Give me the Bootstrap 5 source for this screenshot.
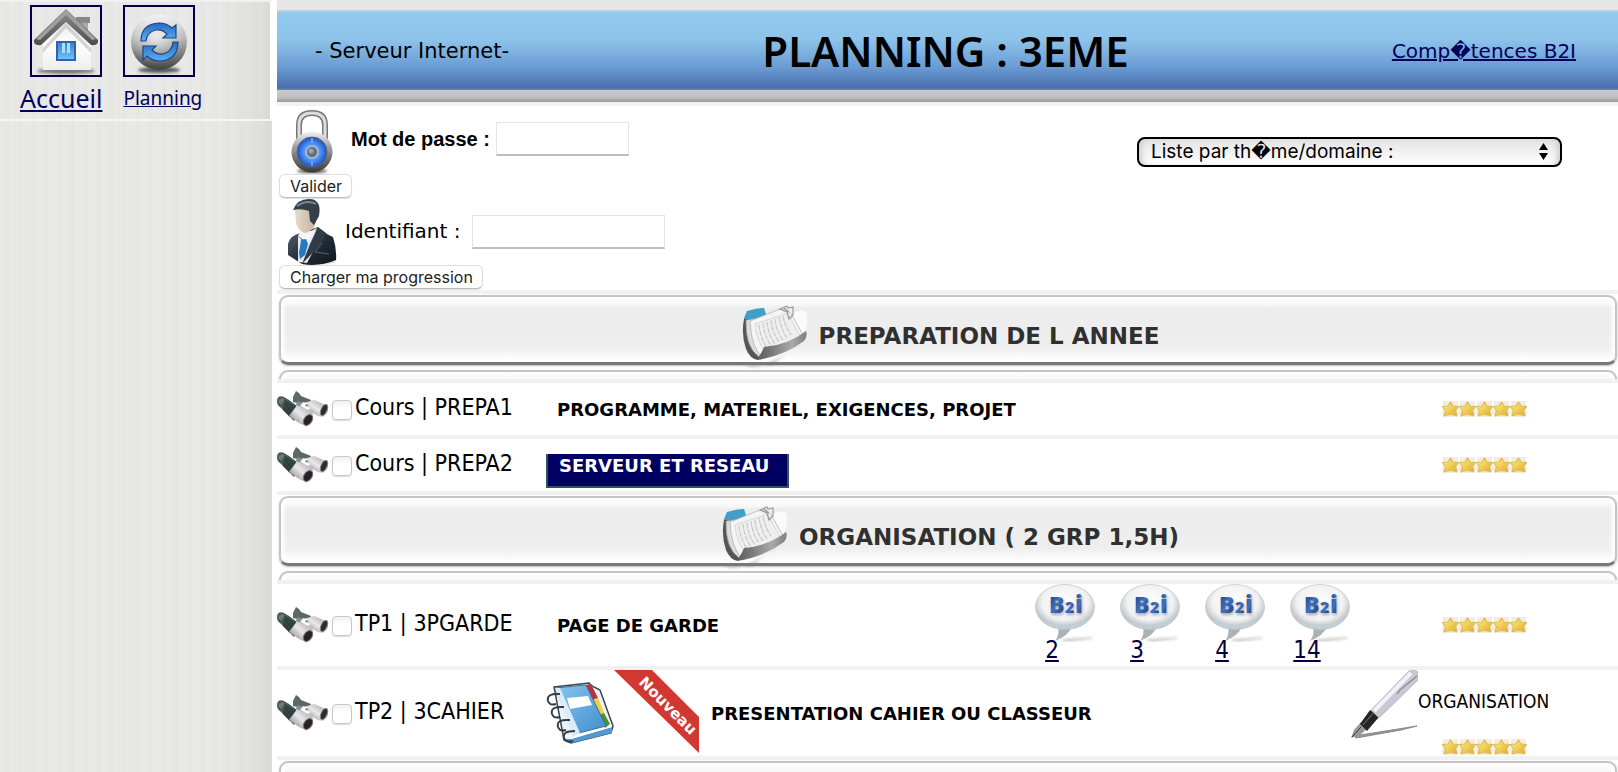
<!DOCTYPE html>
<html lang="fr">
<head>
<meta charset="utf-8">
<meta name="viewport" content="width=device-width, initial-scale=1">
<title>Planning : 3EME</title>
<link rel="stylesheet" href="https://cdn.jsdelivr.net/npm/bootstrap@5.3.0/dist/css/bootstrap.min.css">
<script src="https://cdn.jsdelivr.net/npm/bootstrap@5.3.0/dist/js/bootstrap.bundle.min.js"></script>
<style>
  body { font-family: "DejaVu Sans", Verdana, sans-serif; font-size: 20px; line-height: 24px; color: #000; background: #fff; }
  svg { display: block; flex: none; }
  a { color: #00005a; }
  .side-panel { width: 277px; background: #fff; }
  .stripes { background: linear-gradient(90deg, transparent 80%, rgba(0,0,0,.03) 93%, rgba(0,0,0,.06)), repeating-linear-gradient(90deg, #e8e8e7 0 5px, #e6e6e5 5px 10px, #e9e9e8 10px 13px); }
  .side-top { width: 270px; height: 117px; padding: 3px 0 0 20px; gap: 21px; font-family: "Noto Sans", sans-serif; }
  .side-rest { width: 272px; border-top: 2px solid #f5f5f5; }
  .side-line { height: 2px; width: 272px; background: #f1f1f1; }
  .pict { border: 2px solid #00004d; }
  .txt-home { font-size: 25px; line-height: 32px; padding-top: 5px; }
  .txt-plan { font-size: 19px; line-height: 32px; padding-top: 5px; }
  .top-strip { height: 12px; background: #e6e6e6; border-bottom: 2px solid #c3cdd0; }
  .blue-bar { height: 78px; background: linear-gradient(#93c9ee, #8ec3ea 35%, #6b9dd4 70%, #4a6eaf 97%, #7388ae); padding: 0 42px 0 38px; }
  .blue-bar h1 { font-family: "Noto Sans", sans-serif; font-weight: 600; font-size: 42px; line-height: 48px; }
  .server { font-size: 21px; }
  .grey-bar { height: 16px; background: linear-gradient(#c9cccb, #bfc1c0 60%, #979999) no-repeat 0 0 / 100% 12px #f2f2f2; }
  .login-area { height: 184px; padding: 4px 56px 0 1px; }
  .field { border: 1px solid #e4e4e4; border-bottom: 2px solid #bdbdbd; height: 34px; background: #fff; padding: 0 6px; }
  .pwd { width: 133px; margin-top: 12px; }
  .ident { width: 193px; }
  .lbl-pwd { font: bold 20px/24px "Liberation Sans", Arial, sans-serif; padding-top: 17px; margin-right: 6px; }
  .lbl-ident { margin-right: 12px; padding-bottom: 2px; }
  .mac-btn { font: 16px/22px Inter, sans-serif; color: #222; background: #fff; border: 1px solid #dedede; border-bottom-color: #bdbdbd; border-radius: 6px; padding: 0 9px 0 10px; margin-left: 1px; height: 24px; box-shadow: 0 1px 1px rgba(0,0,0,.12); }
  .theme-box { padding-top: 27px; }
  .theme-list { font: 19px/24px Inter, "DejaVu Sans", sans-serif; color: #000; appearance: none; width: 425px; height: 30px; border: 2px solid #000; border-radius: 8px; padding: 0 12px; background: linear-gradient(#e3e3e3, #fff); box-shadow: inset 5px 0 5px -2px #d0d0d0, inset -5px 0 5px -2px #d0d0d0; }
  .select-arrows { position: absolute; right: 14px; top: 6px; pointer-events: none; }
  .plan { table-layout: fixed; border-collapse: separate; border-spacing: 0 4px; background: #f1f1f1; }
  .plan td { background: #fff; padding: 0; vertical-align: middle; }
  .plan th { background: #fff; padding: 0; font-weight: bold; }
  .h-short { height: 52px; } .h-b2i { height: 82px; } .h-tall { height: 86px; }
  .c-code { width: 269px; } .c-b2i { width: 328px; } .c-stars { width: 267px; }
  .strip { height: 85px; overflow: hidden; padding: 1px 1px 0 2px; }
  .bevel { height: 70px; border: 2px solid #c4c4c4; border-bottom: 3px solid #7b7777; border-radius: 9px; box-shadow: 0 1px 2px #bbb, inset 3px 0 4px #fff, inset -3px 0 4px #fff; background: linear-gradient(#fdfdfd, #f7f7f7 8px, #ededed 11px, #eee 50px, #fff 64px); margin-bottom: 5px; }
  .bevel-title { font-size: 23px; line-height: 28px; color: #303030; gap: 9px; padding-left: 5px; }
  .bevel-title svg { margin-top: 16px; }
  .bevel-title span { padding-top: 12px; }
  .code { font-family: "DejaVu Sans Condensed", "DejaVu Sans", sans-serif; font-size: 23px; line-height: 28px; padding-bottom: 4px; margin-left: 3px; }
  .plan .tick { width: 20px; height: 20px; margin: 2px 0 0 3px; border: 1px solid #c8c8c8; border-radius: 4px; background: linear-gradient(#f0f0f0, #fff 40%); box-shadow: 0 1px 1px #ddd; }
  .lesson { font-size: 18px; font-weight: bold; padding: 1px 0 0 11px; }
  .active-lesson { display: inline-block; width: 243px; height: 34px; margin: 12px 0 0; padding-left: 11px; font-size: 18px; line-height: 23px; font-weight: bold; color: #fff; background: #000062; border: 2px solid #2c5560; border-top: 0; text-decoration: none; vertical-align: middle; }
  .b2i-item { width: 60px; height: 82px; margin-right: 25px; }
  .b2i-item a { font-family: "DejaVu Sans Condensed", "DejaVu Sans", sans-serif; font-size: 24px; line-height: 24px; width: 34px; margin-top: -4px; color: #00003f; text-align: center; }
  .skill { font-family: "DejaVu Sans Condensed", "DejaVu Sans", sans-serif; font-size: 19px; line-height: 62px; }
</style>
</head>
<body>
<svg width="0" height="0" class="position-absolute" aria-hidden="true">
  <defs>
    <linearGradient id="roof" x1="0" y1="0" x2="0" y2="1"><stop offset="0" stop-color="#8d8d8d"/><stop offset="1" stop-color="#4d4d4d"/></linearGradient>
    <linearGradient id="wall" x1="0" y1="0" x2="0" y2="1"><stop offset="0" stop-color="#e9e9e9"/><stop offset=".5" stop-color="#fff"/><stop offset="1" stop-color="#ededed"/></linearGradient>
    <linearGradient id="pane" x1="0" y1="0" x2="0" y2="1"><stop offset="0" stop-color="#3b7fd3"/><stop offset="1" stop-color="#6fc6f5"/></linearGradient>
    <linearGradient id="ball" x1="0" y1="0" x2="0" y2="1"><stop offset="0" stop-color="#f0f0f0"/><stop offset=".45" stop-color="#b4b6b6"/><stop offset=".8" stop-color="#6a6c6c"/><stop offset="1" stop-color="#3f4040"/></linearGradient>
    <radialGradient id="ballglow" cx=".45" cy=".4" r=".5"><stop offset="0" stop-color="#fff" stop-opacity=".7"/><stop offset="1" stop-color="#fff" stop-opacity="0"/></radialGradient>
    <linearGradient id="arrow" x1="0" y1="0" x2="0" y2="1"><stop offset="0" stop-color="#2a68bd"/><stop offset="1" stop-color="#57b2f3"/></linearGradient>
    <linearGradient id="lockbody" x1="0" y1="0" x2="0" y2="1"><stop offset="0" stop-color="#f4f4f4"/><stop offset=".35" stop-color="#a5a5a5"/><stop offset="1" stop-color="#393939"/></linearGradient>
    <radialGradient id="dial"><stop offset="0" stop-color="#9fd0ff"/><stop offset=".6" stop-color="#4a8cf5"/><stop offset="1" stop-color="#1c4fc4"/></radialGradient>
    <linearGradient id="suit" x1="0" y1="0" x2="1" y2="1"><stop offset="0" stop-color="#5a6573"/><stop offset=".5" stop-color="#252e3b"/><stop offset="1" stop-color="#10161f"/></linearGradient>
    <linearGradient id="face" x1="0" y1="0" x2="1" y2="0"><stop offset="0" stop-color="#e5dacb"/><stop offset="1" stop-color="#c5b29b"/></linearGradient>
    <linearGradient id="silver" x1="0" y1="1" x2="1" y2="0"><stop offset="0" stop-color="#6c6a6c"/><stop offset=".5" stop-color="#ebe8ea"/><stop offset="1" stop-color="#9b989b"/></linearGradient>
    <linearGradient id="folder" x1="0" y1="0" x2="1" y2="0"><stop offset="0" stop-color="#5c5c5c"/><stop offset=".3" stop-color="#7a7a7a"/><stop offset=".7" stop-color="#aaa"/><stop offset="1" stop-color="#7e7e7e"/></linearGradient>
    <linearGradient id="starfill" x1="0" y1="0" x2="1" y2="1"><stop offset="0" stop-color="#fdf0a0"/><stop offset=".5" stop-color="#f0ce5a"/><stop offset="1" stop-color="#dba72e"/></linearGradient>
    <radialGradient id="bubblefill" cx=".5" cy=".4" r=".6"><stop offset="0" stop-color="#fff"/><stop offset=".65" stop-color="#f1f2f4"/><stop offset="1" stop-color="#a9adb2"/></radialGradient>
    <linearGradient id="b2iblue" x1="0" y1="0" x2="1" y2="1"><stop offset="0" stop-color="#12306e"/><stop offset=".5" stop-color="#3f72c2"/><stop offset="1" stop-color="#142e68"/></linearGradient>
    <linearGradient id="cover" x1="0" y1="0" x2="1" y2="1"><stop offset="0" stop-color="#8ac4ec"/><stop offset="1" stop-color="#3f8fd0"/></linearGradient>
    <filter id="soft" x="-30%" y="-100%" width="160%" height="300%"><feGaussianBlur stdDeviation="1.5"/></filter>

    <symbol id="i-bino" viewBox="0 0 52 38">
      <path d="M16 7 19 1l3 2 2 3 10 4-1 5-9-1-8-2z" fill="#5d6966"/>
      <path d="M0 11c0-4 3-6 7-4l5 3 12 9-7 12L3 17c-2-1-3-3-3-6z" fill="#4a5957"/>
      <path d="M8 10l13 8-8 9-7-7z" fill="#32423f"/>
      <path d="M2 10q2-3 6-1l-4 6q-3-2-2-5z" fill="#6d7b78"/>
      <path d="M27 13l10-3 12 5c4 3 2 10-3 12l-5-1-14-8z" fill="url(#silver)"/>
      <path d="M12 26l9-12 14 8c3 5-1 12-6 14l-7-3z" fill="url(#silver)"/>
      <path d="M20 11l12 4-5 3-8-3z" fill="#87908e"/>
      <path d="M26 12l4 1-2 3 6 2-3 2-8-4z" fill="#f8f8f8"/>
      <ellipse cx="31" cy="30" rx="4" ry="6" transform="rotate(35 31 30)" fill="#2b2029" stroke="#777"/>
      <ellipse cx="47" cy="20" rx="3" ry="6" transform="rotate(25 47 20)" fill="#30292e" stroke="#888"/>
    </symbol>
    <symbol id="i-star" viewBox="0 0 17 17">
      <path d="M1 0h15l1 13-4 3H3l-3-3z" fill="#f1ede3"/>
      <path d="M8.500 1 11 5l5.500.5-3 4 1.500 5.500q-6.500-2.500-13 0l1.500-5.500-3-4L6 5z" fill="url(#starfill)" stroke="#e3bb4c" stroke-width="1.200" stroke-linejoin="round"/>
    </symbol>
    <symbol id="i-stars" viewBox="0 0 85 17">
      <use href="#i-star" width="17" height="17"/><use href="#i-star" x="17" width="17" height="17"/><use href="#i-star" x="34" width="17" height="17"/><use href="#i-star" x="51" width="17" height="17"/><use href="#i-star" x="68" width="17" height="17"/>
    </symbol>
    <symbol id="i-folder" viewBox="0 0 68 66">
      <path d="M2 60Q18 66 42 50L64 32 30 60z" fill="#777" opacity=".55" filter="url(#soft)"/>
      <path d="M50 8Q62 3 65 8Q67 20 60 30L48 24z" fill="#fafafa"/>
      <path d="M2 13 5 6q10-3 17-3l2 6-4 4L2 17z" fill="#3f9fc9"/>
      <path d="M2 14Q-1 30 4 44Q8 54 16 55L19 49Q8 38 8 14z" fill="#555"/>
      <path d="M4 15Q3 42 17 52L27 38 15 13z" fill="#dcdcdc" stroke="#8b8b8b" stroke-width=".7"/>
      <path d="M8 16 38 4Q48 5 51 12L61 30 20 52Q9 42 8 16z" fill="#f4f4f4" stroke="#aaa" stroke-width=".7"/>
      <path d="M13 19 46 8Q54 25 59 32L24 47Q15 38 13 19z" fill="#efefef" stroke="#ccc" stroke-width=".7"/>
      <path d="M17 20q1 12 8 23M21 18q1 12 8 23M25 17q1 12 8 22M29 15q1 12 8 22M33 14q1 12 8 21M37 12q2 12 8 21M41 11q2 10 8 19" fill="none" stroke="#cacaca" stroke-width="1.300" stroke-dasharray="5 1"/>
      <path d="M15 55Q20 47 22 42Q46 40 64 26Q66 31 62 36Q42 51 15 55z" fill="url(#folder)"/>
      <path d="M38 4l7-3 1 2 5-1v8l-4 4-2-7zM42 3l5 4" fill="none" stroke="#999" stroke-width="1.200"/>
    </symbol>
    <symbol id="i-b2i" viewBox="0 0 60 58">
      <path d="M27 56 57 54 33 57z" fill="#777" stroke="#888" opacity=".6" filter="url(#soft)"/>
      <path d="M23 42l13 2q-2 7-16 13 5-6 3-15z" fill="#a9b2b7"/>
      <ellipse cx="30" cy="23" rx="29.500" ry="22.500" fill="url(#bubblefill)" stroke="#c7c9cc" stroke-width=".8"/>
      <path d="M5 34Q30 50 55 34Q47 45 30 45T5 34z" fill="#c1cfd7"/>
      <g font-family="Noto Sans, sans-serif" font-weight="900" fill="#777" opacity=".6" filter="url(#soft)"><text x="15" y="31" font-size="23">B</text><text x="31" y="31" font-size="16">2</text><text x="41" y="31" font-size="24">i</text></g>
      <g font-family="Noto Sans, sans-serif" font-weight="900" fill="url(#b2iblue)"><text x="14" y="29" font-size="23">B</text><text x="30" y="29" font-size="16">2</text><text x="40" y="29" font-size="24">i</text></g>
    </symbol>
  </defs>
</svg>

<div class="d-flex vh-100 overflow-hidden">
  <nav class="side-panel d-flex flex-column flex-shrink-0">
    <div class="side-line"></div>
    <div class="side-top stripes d-flex">
      <a href="#" class="d-flex flex-column align-items-end">
        <svg class="pict" width="72" height="72" viewBox="0 0 68 68" role="img" aria-label="Accueil">
          <ellipse cx="34" cy="64" rx="29" ry="3" fill="#777" filter="url(#soft)"/>
          <path d="M46 10h12v6h-2v18l-10-9z" fill="#aaa"/><path d="M44 10h14v6H44z" fill="#888"/>
          <path d="M11 37 34 12l25 25v26H11z" fill="url(#wall)"/>
          <path d="M11 41 34 16l25 25v5L34 21 11 46z" fill="#bdbdbd" opacity=".6"/>
          <path d="M34 2 66 33q1 6-7 5L34 15 9 38q-8 1-7-5z" fill="url(#roof)"/>
          <path d="M34 3 64 32 60 33 34 8 8 33 4 32z" fill="#a0a0a0"/>
          <path d="M25 35h18v18H25z" fill="url(#pane)" stroke="#3660aa" stroke-width="2"/>
          <path d="M30 36h3v10h-3zM35 36h3v10h-3z" fill="#a5e2fb"/>
        </svg>
        <span class="txt-home">Accueil</span>
      </a>
      <a href="#" class="d-flex flex-column align-items-start">
        <svg class="pict" width="72" height="72" viewBox="0 0 68 68" role="img" aria-label="Planning">
          <ellipse cx="34" cy="63" rx="21" ry="3" fill="#555" filter="url(#soft)"/>
          <circle cx="34" cy="35" r="28" fill="url(#ball)"/><circle cx="34" cy="35" r="28" fill="url(#ballglow)"/>
          <path d="M16 34Q16 17 34 16q8 0 13 5l4-3v13H38l4-4q-5-5-11-4-9 2-10 11z" fill="url(#arrow)" stroke="#1c4784" stroke-width="1.200"/>
          <path d="M53 35q0 18-18 19-8 0-13-5l-4 4V39h13l-4 4q5 5 11 4 9-2 10-12z" fill="url(#arrow)" stroke="#1c4784" stroke-width="1.200"/>
        </svg>
        <span class="txt-plan">Planning</span>
      </a>
    </div>
    <div class="side-rest stripes flex-grow-1"></div>
  </nav>

  <main class="flex-grow-1 overflow-hidden">
    <header>
      <div class="top-strip"></div>
      <div class="blue-bar row g-0 align-items-center">
        <div class="col server">- Serveur Internet-</div>
        <h1 class="col-auto m-0">PLANNING : 3EME</h1>
        <div class="col text-end"><a href="#">Comp�tences B2I</a></div>
      </div>
      <div class="grey-bar"></div>
    </header>

    <section class="login-area d-flex justify-content-between">
      <div>
        <form>
          <div class="d-flex align-items-start">
            <svg width="73" height="64" viewBox="0 0 73 64" aria-hidden="true">
              <ellipse cx="34" cy="61" rx="15" ry="2" fill="#555" filter="url(#soft)"/>
              <path d="M21 30V15Q21 3 34 3T47 15V30" fill="none" stroke="#777" stroke-width="6"/>
              <path d="M21 30V15Q21 3 34 3T47 15V30" fill="none" stroke="#ddd" stroke-width="3"/>
              <circle cx="34" cy="42" r="20.500" fill="url(#lockbody)"/>
              <circle cx="34" cy="42" r="15" fill="url(#dial)" stroke="#567" stroke-width="1"/>
              <path d="M34 28v5M34 51v5" stroke="#9fd1ff"/>
              <circle cx="34" cy="42" r="6" fill="#667079" stroke="#b4c2cc" stroke-width="1.500"/><circle cx="33" cy="41" r="2.500" fill="#9ca4ab"/>
            </svg>
            <label class="lbl-pwd" for="pwd">Mot de passe :</label>
            <input class="field pwd" type="password" id="pwd">
          </div>
          <button type="button" class="mac-btn d-block">Valider</button>
        </form>
        <form>
          <div class="d-flex align-items-center">
            <svg width="67" height="67" viewBox="-1 0 67 67" aria-hidden="true">
              <ellipse cx="38" cy="62" rx="18" ry="3" fill="#888" filter="url(#soft)"/>
              <path d="M9 46Q11 37 22 35l17-6q4 5 15 10 4 12 3 23-17 7-34 4L9 57z" fill="url(#suit)"/>
              <path d="M19 38 30 46 38 30 32 33 22 32z" fill="#f3f5f7"/><path d="M19 38l5 5-3 18 8-18 10-13-2 18-9 17-9-1z" fill="#e5eaef"/>
              <path d="M22 42l5-1 2 5-3 11-5 4-1-6z" fill="#2778bd"/>
              <path d="M31 46 39 29l8 6-4 10-20 21z" fill="#323c48"/><path d="M43 45l-7 9 14 2" fill="none" stroke="#596371"/>
              <path d="M16 11Q22 7 32 10L37 24Q35 33 26 35 19 33 17 25z" fill="url(#face)"/>
              <path d="M14 12Q18 1 30 1 43 1 40 18l-5 9-4-4-1-10q-8-3-16-1z" fill="#353f49"/>
              <path d="M18 8Q28 1 37 6" fill="none" stroke="#7a8792" stroke-width="2"/>
            </svg>
            <label class="lbl-ident" for="ident">Identifiant :</label>
            <input class="field ident" type="text" id="ident">
          </div>
          <button type="button" class="mac-btn d-block">Charger ma progression</button>
        </form>
      </div>
      <div class="theme-box">
        <div class="position-relative">
          <select class="theme-list d-block" aria-label="Liste par thème"><option>Liste par th�me/domaine :</option></select>
          <svg class="select-arrows" width="9" height="18" viewBox="0 0 9 18" aria-hidden="true"><path d="M0 7 4.500 0 9 7zM0 10h9l-4.500 7z"/></svg>
        </div>
      </div>
    </section>

    <table class="plan w-100">
      <colgroup><col class="c-code"><col><col class="c-b2i"><col class="c-stars"></colgroup>
      <tbody>
        <tr><th colspan="4">
          <div class="strip">
            <div class="bevel bevel-title d-flex align-items-center justify-content-center"><svg width="68" height="66"><use href="#i-folder"/></svg><span>PREPARATION DE L ANNEE</span></div>
            <div class="bevel"></div>
          </div>
        </th></tr>
        <tr class="h-short">
          <td><div class="d-flex align-items-center"><svg width="52" height="38"><use href="#i-bino"/></svg><input class="form-check-input tick" type="checkbox" id="c1"><label class="code" for="c1">Cours | PREPA1</label></div></td>
          <td colspan="2"><div class="lesson">PROGRAMME, MATERIEL, EXIGENCES, PROJET</div></td>
          <td><svg class="mx-auto" width="85" height="17" role="img" aria-label="5 étoiles"><use href="#i-stars"/></svg></td>
        </tr>
        <tr class="h-short">
          <td><div class="d-flex align-items-center"><svg width="52" height="38"><use href="#i-bino"/></svg><input class="form-check-input tick" type="checkbox" id="c2"><label class="code" for="c2">Cours | PREPA2</label></div></td>
          <td colspan="2"><a class="active-lesson" href="#">SERVEUR ET RESEAU</a></td>
          <td><svg class="mx-auto" width="85" height="17" role="img" aria-label="5 étoiles"><use href="#i-stars"/></svg></td>
        </tr>
        <tr><th colspan="4">
          <div class="strip">
            <div class="bevel bevel-title d-flex align-items-center justify-content-center"><svg width="68" height="66"><use href="#i-folder"/></svg><span>ORGANISATION ( 2 GRP 1,5H)</span></div>
            <div class="bevel"></div>
          </div>
        </th></tr>
        <tr class="h-b2i">
          <td><div class="d-flex align-items-center"><svg width="52" height="38"><use href="#i-bino"/></svg><input class="form-check-input tick" type="checkbox" id="c3"><label class="code" for="c3">TP1 | 3PGARDE</label></div></td>
          <td><div class="lesson">PAGE DE GARDE</div></td>
          <td><div class="d-flex ps-2 ms-1">
            <div class="b2i-item"><svg width="60" height="58"><use href="#i-b2i"/></svg><a class="d-block" href="#">2</a></div>
            <div class="b2i-item"><svg width="60" height="58"><use href="#i-b2i"/></svg><a class="d-block" href="#">3</a></div>
            <div class="b2i-item"><svg width="60" height="58"><use href="#i-b2i"/></svg><a class="d-block" href="#">4</a></div>
            <div class="b2i-item me-0"><svg width="60" height="58"><use href="#i-b2i"/></svg><a class="d-block" href="#">14</a></div>
          </div></td>
          <td><svg class="mx-auto" width="85" height="17" role="img" aria-label="5 étoiles"><use href="#i-stars"/></svg></td>
        </tr>
        <tr class="h-tall">
          <td><div class="d-flex align-items-center"><svg width="52" height="38"><use href="#i-bino"/></svg><input class="form-check-input tick" type="checkbox" id="c4"><label class="code" for="c4">TP2 | 3CAHIER</label></div></td>
          <td colspan="2"><div class="d-flex align-items-center">
            <svg width="68" height="62" viewBox="0 0 68 62" aria-hidden="true">
              <path d="M8 5 43 1l3 3 8 4 13 36-2 7-40 10-7-3z" fill="#eef2f4" stroke="#39444d" stroke-width="1.500"/>
              <path d="M25 57 66 45v6L26 61l-8-4z" fill="#4f9ad0"/>
              <path d="M23 53 65 42l1 3-41 12z" fill="#fff"/>
              <path d="M39 3 45 2 52 16 46 18z" fill="#bd2f3d"/><path d="M46 18l6-2 6 15-5 2z" fill="#efcf3b"/><path d="M53 33l5-2 6 11-5 4z" fill="#4a8f35"/>
              <path d="M9 6 40 3 60 44 29 52z" fill="url(#cover)" stroke="#3f6f96"/>
              <path d="M9 6 14 6 34 51 27 55z" fill="#d9ecf8"/>
              <path d="M21 16 42 14l4 9-22 4z" fill="#fff"/>
              <g fill="none" stroke="#333d45" stroke-width="2"><path d="M14 12Q0 11 2 19q2 5 8 3"/><path d="M18 25Q4 24 6 32q2 5 8 3"/><path d="M24 38Q10 37 12 45q2 5 8 3"/><path d="M29 49q-13 0-11 7 2 5 9 3"/></g>
            </svg>
            <svg width="86" height="86" viewBox="0 0 86 86" role="img" aria-label="Nouveau">
              <path d="M0 0h38l47 47v36z" fill="#d23832"/>
              <text transform="rotate(45 24 13)" x="24" y="13" font-family="DejaVu Sans, sans-serif" font-weight="bold" font-size="15" fill="#fff">Nouveau</text>
            </svg>
            <div class="lesson">PRESENTATION CAHIER OU CLASSEUR</div>
          </div></td>
          <td><div class="d-flex">
            <svg width="67" height="69" viewBox="0 0 67 69" aria-hidden="true">
              <path d="M3 66 66 56 50 60 5 68z" fill="#999" stroke="#888" stroke-width="1"/>
              <path d="M0 68 3 60 10 52 17 58 9 65z" fill="#999"/><path d="M1 67 10 57" stroke="#333"/>
              <path d="M9 54 19 40l9 7-12 14z" fill="#252525"/><path d="M12 55 24 41" stroke="#777"/>
              <path d="M20 40 58 1q6-2 9 1v8L28 48z" fill="#c8cad3" stroke="#a9abb5" stroke-width=".7"/>
              <path d="M23 41 60 3" stroke="#f1f2f7" stroke-width="4"/><path d="M66 6 49 20 46 24" stroke="#8b8d99" stroke-width="1.500" fill="none"/>
            </svg>
            <span class="skill">ORGANISATION</span>
          </div>
          <svg class="mx-auto" width="85" height="17" role="img" aria-label="5 étoiles"><use href="#i-stars"/></svg></td>
        </tr>
        <tr><th colspan="4"><div class="strip"><div class="bevel"></div><div class="bevel"></div></div></th></tr>
      </tbody>
    </table>
  </main>
</div>
</body>
</html>
